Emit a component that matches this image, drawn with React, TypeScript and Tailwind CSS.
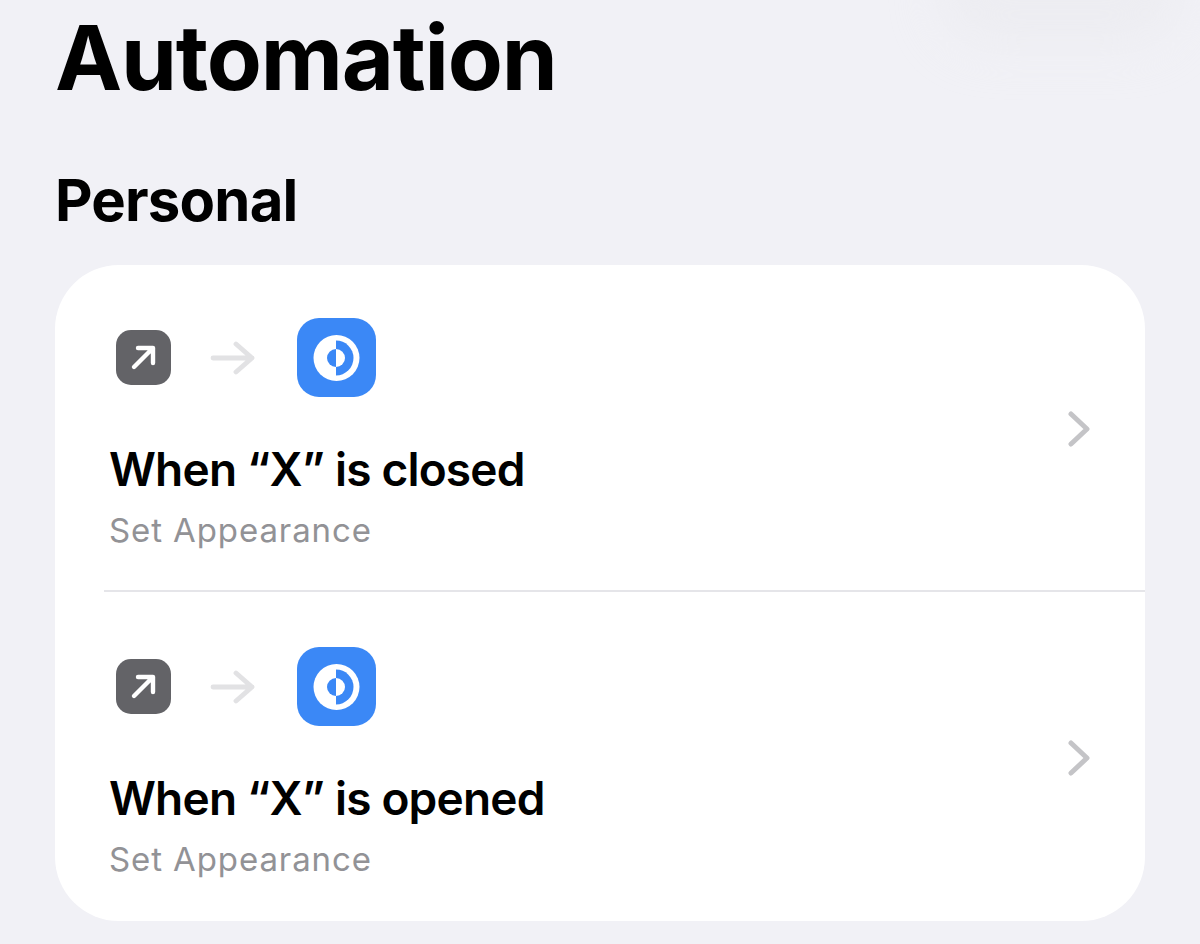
const font = "font-['Inter','Liberation_Sans',sans-serif]";

function TriggerIcon() {
  return (
    <svg width="55" height="55" viewBox="0 0 55 55" className="shrink-0">
      <rect width="55" height="55" rx="15" fill="#636367" />
      <path d="M18 37 L37 18 M22 18 H37 V33" fill="none" stroke="#fff" strokeWidth="4.4" strokeLinecap="round" strokeLinejoin="round" />
    </svg>
  );
}

function FlowArrow() {
  return (
    <svg width="46" height="34" viewBox="0 0 46 34" className="shrink-0">
      <path d="M3 17 H42 M26 3 L42 17 L26 31" fill="none" stroke="#e2e2e4" strokeWidth="4.8" strokeLinecap="round" strokeLinejoin="round" />
    </svg>
  );
}

function AppearanceIcon() {
  return (
    <svg width="79" height="79" viewBox="0 0 79 79" className="shrink-0">
      <rect width="79" height="79" rx="22" fill="#3b88f6" />
      <circle cx="39.5" cy="40" r="23" fill="#fff" />
      <path d="M39 22.5 A17.5 17.5 0 0 1 39 57.5 Z" fill="#3b88f6" />
      <path d="M39 31 A9 9 0 0 0 39 49 Z" fill="#3b88f6" />
      <path d="M39 31 A9 9 0 0 1 39 49 Z" fill="#fff" />
    </svg>
  );
}

function Chevron() {
  return (
    <svg width="22" height="36" viewBox="0 0 22 36" className="shrink-0">
      <path d="M3 3 L19 18 L3 33" fill="none" stroke="#c4c4c7" strokeWidth="5" strokeLinecap="round" strokeLinejoin="round" />
    </svg>
  );
}

function Row({ title }: { title: string }) {
  return (
    <div className="flex h-[327px] justify-between pt-[53px] pr-[55px] pl-[6px]">
      <div className="flex flex-col">
        <div className="flex h-[79px] items-center pl-[6px]">
          <TriggerIcon />
          <div className="ml-[39px]"><FlowArrow /></div>
          <div className="ml-[41px]"><AppearanceIcon /></div>
        </div>
        <div className="mt-[44px] -ml-px text-[46px] leading-[56px] font-semibold tracking-[-0.8px] text-black">{title}</div>
        <div className="mt-[13px] -ml-px text-[33px] leading-[40px] tracking-[0.9px] text-[#929296]">Set Appearance</div>
      </div>
      <div className="-mt-[53px] self-center"><Chevron /></div>
    </div>
  );
}

export default function App() {
  return (
    <div className={`${font} relative h-[944px] w-[1200px] overflow-hidden bg-[#f1f1f6] px-[55px]`}>
      <div className="pointer-events-none absolute -top-[55px] right-[20px] h-[100px] w-[240px] rounded-full bg-[#e9e9ed] opacity-50 blur-[25px]" />
      <div className="relative">
        <h1 className="pt-[5px] text-[90px] leading-[106px] font-bold tracking-[-1.2px] text-black">Automation</h1>
        <h2 className="mt-[54px] text-[58px] leading-[70px] font-bold tracking-[-0.8px] text-black">Personal</h2>
        <div className="mt-[30px] h-[656px] rounded-[64px] bg-white pl-[49px]">
          <Row title="When “X” is closed" />
          <div className="-mt-[2px] mb-[2px] h-[2px] bg-[#e5e5e9]" />
          <Row title="When “X” is opened" />
        </div>
      </div>
    </div>
  );
}
